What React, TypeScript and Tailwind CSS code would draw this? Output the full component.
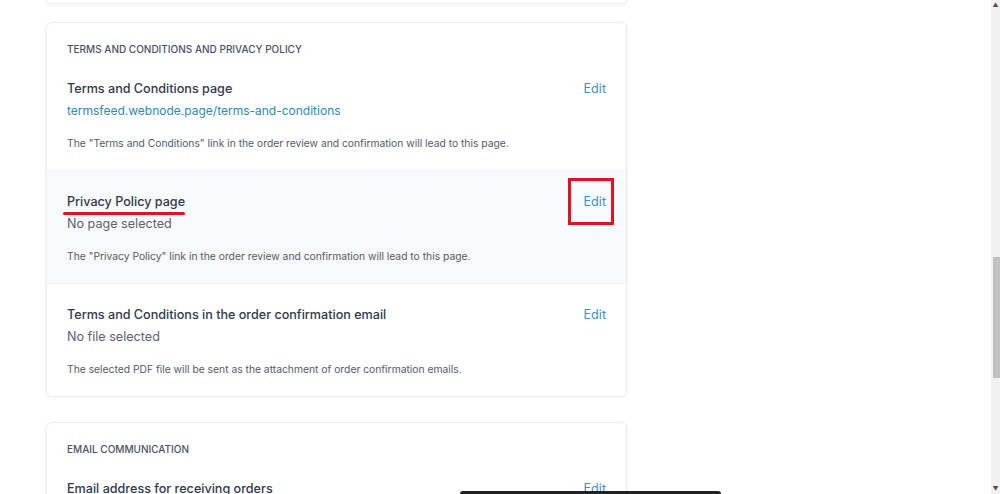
import React from 'react';

type Row = {
  title: string;
  value: string;
  isLink?: boolean;
  note: string;
  highlight?: boolean;
};

const rows: Row[] = [
  {
    title: 'Terms and Conditions page',
    value: 'termsfeed.webnode.page/terms-and-conditions',
    isLink: true,
    note: 'The "Terms and Conditions" link in the order review and confirmation will lead to this page.',
  },
  {
    title: 'Privacy Policy page',
    value: 'No page selected',
    note: 'The "Privacy Policy" link in the order review and confirmation will lead to this page.',
    highlight: true,
  },
  {
    title: 'Terms and Conditions in the order confirmation email',
    value: 'No file selected',
    note: 'The selected PDF file will be sent as the attachment of order confirmation emails.',
  },
];

const SettingRow: React.FC<{ row: Row }> = ({ row }) => (
  <div
    className={`flex justify-between px-5 pt-[22px] pb-[20px] ${
      row.highlight ? 'bg-[#f8f9fb] border-y border-[#f0f2f5]' : ''
    }`}
  >
    <div>
      <div className="relative w-fit">
        <h3 className="text-[12.6px] leading-[18px] font-medium text-[#2f3a4a]">{row.title}</h3>
        {row.highlight && (
          <span className="absolute -left-[4px] right-0 top-[19px] h-[3px] rounded-full bg-[#e0141e]"></span>
        )}
      </div>
      <p
        className={`mt-1 leading-[18px] ${
          row.isLink ? 'text-[12px] text-[#2b8bb3]' : 'text-[12.6px] text-[#5b6270]'
        }`}
      >
        {row.value}
      </p>
      <p className="mt-[16px] text-[10.3px] leading-[14px] text-[#555c66]">{row.note}</p>
    </div>
    <div className="relative h-[18px]">
      <button className="block text-[12.6px] leading-[18px] text-[#3d92c0]">Edit</button>
      {row.highlight && (
        <span className="absolute -left-[16px] -right-[8px] -top-[15px] h-[47px] border-[3px] border-[#e0141e]"></span>
      )}
    </div>
  </div>
);

const App: React.FC = () => {
  return (
    <div
      className="relative flex h-[494px] w-[1000px] overflow-hidden bg-white"
      style={{ fontFamily: 'Inter, "Open Sans", sans-serif' }}
    >
      <div className="flex-1 pl-[46px]">
        <div className="w-[581px] h-[4px] rounded-b-md border-x border-b border-[#eef0f3] shadow-[0_1px_4px_rgba(30,40,60,0.06)]"></div>

        <div className="mt-[18px] w-[581px] rounded-md border border-[#eceef2] bg-white shadow-[0_1px_4px_rgba(30,40,60,0.06)]">
          <div className="px-5 pt-[19px] pb-[2px]">
            <h2 className="text-[10px] leading-[14px] font-medium uppercase text-[#4a5262]">
              Terms and Conditions and Privacy Policy
            </h2>
          </div>
          {rows.map((row) => (
            <SettingRow key={row.title} row={row} />
          ))}
        </div>

        <div className="mt-[25px] w-[581px] rounded-md border border-[#eceef2] bg-white shadow-[0_1px_4px_rgba(30,40,60,0.06)]">
          <div className="px-5 pt-[19px] pb-[2px]">
            <h2 className="text-[10px] leading-[14px] font-medium uppercase text-[#4a5262]">
              Email communication
            </h2>
          </div>
          <div className="flex justify-between px-5 pt-[22px]">
            <h3 className="text-[12.6px] leading-[18px] font-medium text-[#2f3a4a]">
              Email address for receiving orders
            </h3>
            <button className="block text-[12.6px] leading-[18px] text-[#3d92c0]">Edit</button>
          </div>
        </div>
      </div>

      {/* scrollbar */}
      <div className="flex w-[9px] flex-col items-center justify-between bg-[#f1f1f1] py-[2px]">
        <span className="text-[6px] leading-[6px] text-[#505050]">▲</span>
        <span className="text-[6px] leading-[6px] text-[#505050]">▼</span>
      </div>
      <div className="absolute right-0 top-[257px] h-[121px] w-[7px] bg-[#c1c1c1]"></div>

      <div className="absolute bottom-0 left-[460px] h-[3px] w-[261px] rounded-t-sm bg-[#222]"></div>
    </div>
  );
};

export default App;
